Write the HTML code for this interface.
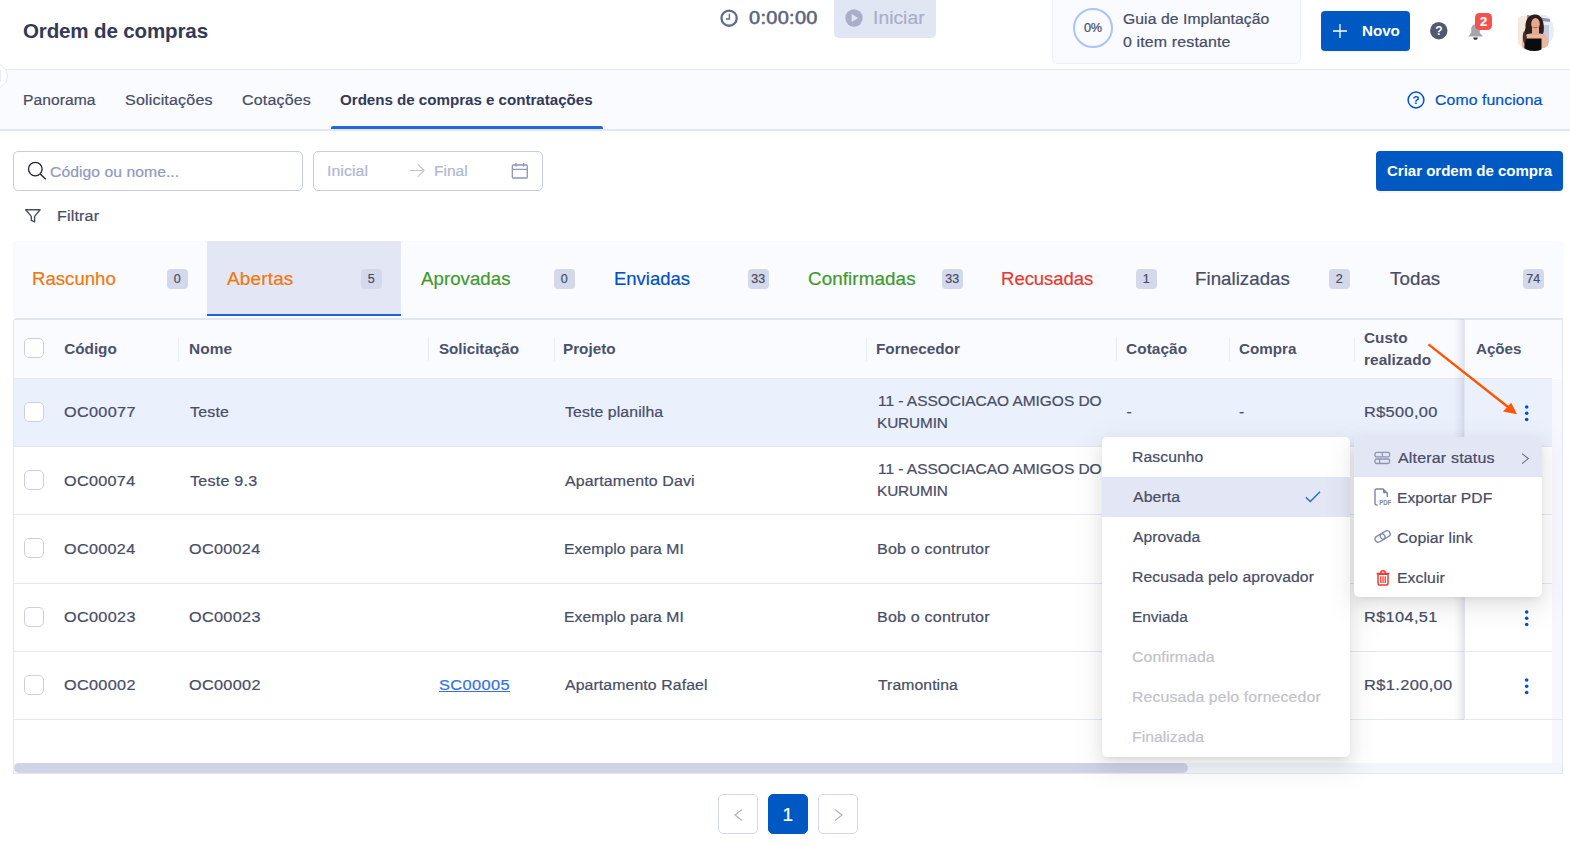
<!DOCTYPE html>
<html lang="pt-BR">
<head>
<meta charset="utf-8">
<title>Ordem de compras</title>
<style>
*{box-sizing:border-box;margin:0;padding:0}
html,body{width:1570px;height:846px;overflow:hidden;background:#fff}
body{font-family:"Liberation Sans",sans-serif;color:#474d66;font-size:16px;position:relative}
.a,.t{position:absolute}
.t{transform-origin:0 0;white-space:nowrap;line-height:30px;height:30px;-webkit-text-stroke:0.22px currentColor}
.b{font-weight:700;-webkit-text-stroke:0}
svg{display:block;position:absolute;overflow:visible}
.inp{border:1px solid #c5cce3;border-radius:5px;background:#fff}
.bdg{top:269px;width:20.500px;height:20px;border-radius:4px;background:#d3d8ea}
.sep{top:337px;width:1px;height:24px;background:#e9ecf6}
.hl{left:14px;width:1538px;height:1px;background:#e3e7f6}
.cb{left:24px;width:20px;height:20px;border:1px solid #c9cfe4;border-radius:5px;background:#fff}
.pg{top:794px;width:40px;height:40px;border:1px solid #d3d9ee;border-radius:5px;background:#fff}
.menu{background:#fff;border-radius:5px;box-shadow:0 6px 16px 0 rgba(0,0,0,.08),0 3px 6px -4px rgba(0,0,0,.12),0 9px 28px 8px rgba(0,0,0,.05)}
</style>
</head>
<body>
<!-- ===== header ===== -->
<div class="a" style="left:0;top:69px;width:1570px;height:62px;background:#fafbff;border-top:1px solid #e3e7f6;border-bottom:2px solid #e1e5f4"></div>
<div class="a" style="left:-18.500px;top:62.500px;width:26.500px;height:26.500px;border:1px solid #e3e7f6;border-radius:50%;background:#fff"></div>
<div class="a" style="left:0;top:70px;width:1px;height:12px;background:#eceef4"></div>
<!-- clock -->
<svg style="left:720px;top:9px" width="18" height="18" viewBox="0 0 18 18"><circle cx="9.100" cy="9.150" r="7.600" fill="none" stroke="#5f6a90" stroke-width="2.300"/><path d="M9.400 4.800V10H5.900" fill="none" stroke="#5f6a90" stroke-width="1.400"/></svg>
<div class="a" style="left:834px;top:-4px;width:102px;height:42px;background:#e1e6f5;border-radius:5px"></div>
<svg style="left:845px;top:9px" width="18" height="18" viewBox="0 0 18 18"><circle cx="9" cy="9" r="8.700" fill="#a9afc9"/><path d="M6.700 4.900L13 9L6.700 13.100Z" fill="#e1e6f5"/></svg>
<!-- guia -->
<div class="a" style="left:1052px;top:-6px;width:249px;height:70px;border:1px solid #edf0fa;border-radius:6px;background:#fafbff"></div>
<div class="a" style="left:1073px;top:8px;width:40px;height:40px;border-radius:50%;border:2.200px solid #adc3f7"></div>
<!-- novo -->
<div class="a" style="left:1321px;top:11px;width:89px;height:40px;background:#0059c3;border-radius:4px;box-shadow:0 2px 0 rgba(0,40,120,.04)"></div>
<svg style="left:1333px;top:24px" width="14" height="14" viewBox="0 0 14 14"><path d="M7 0V14M0 7H14" stroke="#fff" stroke-width="1.300" fill="none"/></svg>
<!-- help -->
<svg style="left:1430px;top:22px" width="18" height="18" viewBox="0 0 18 18"><circle cx="8.800" cy="8.700" r="8.700" fill="#525970"/><text x="8.800" y="13" font-family="Liberation Sans, sans-serif" font-size="12" font-weight="700" fill="#fff" text-anchor="middle">?</text></svg>
<!-- bell -->
<svg style="left:1467px;top:23px" width="18" height="18" viewBox="0 0 18 18"><path d="M8.500 1.200C5.600 1.200 4.200 3.400 4.200 6V9.800L1.200 13.400H15.800L12.800 9.800V6C12.800 3.400 11.400 1.200 8.500 1.200Z" fill="#a6a6aa"/><path d="M6.300 14.500H10.700C10.700 15.900 9.800 16.800 8.500 16.800C7.200 16.800 6.300 15.900 6.300 14.500Z" fill="#2e2f36"/></svg>
<div class="a" style="left:1475px;top:13px;width:17px;height:17px;border-radius:4.500px;background:#f5514f"></div>
<div class="t" style="left:1475px;top:6.500px;width:17px;text-align:center;font-size:13px;font-weight:700;color:#fff">2</div>
<!-- avatar -->
<svg style="left:1514px;top:11px" width="40" height="40" viewBox="0 0 40 40">
<defs><clipPath id="avc"><circle cx="20" cy="20" r="20"/></clipPath></defs>
<g clip-path="url(#avc)">
<rect width="40" height="40" fill="#fdfdfd"/>
<rect x="13" y="4" width="27" height="26" fill="#e8edf5"/>
<rect x="27" y="14" width="8" height="18" fill="#c3ccda"/>
<rect x="4" y="5" width="9" height="36" fill="#f3e9df"/>
<path d="M13 4L36 8V11L13 8Z" fill="#8c98ad"/>
<path d="M20 3.500C14 4 11 10 11.500 17C10 21 9.500 25 10.500 28L15 24L29 23C30.500 19 30 13 28.500 9C27 5 24 3.200 20 3.500Z" fill="#2d1c1a"/>
<path d="M8 30C9 25 13 22.500 17 22.500H26C31 22.500 34 26 34.500 31V37H8Z" fill="#e9b79e"/>
<ellipse cx="21.500" cy="13" rx="4.300" ry="6" fill="#e2ab91"/>
<path d="M18 17H25V24H18Z" fill="#e2ab91"/>
<path d="M18.500 15.200C20 16.600 23 16.600 24.500 15.200C23.500 17.600 19.500 17.600 18.500 15.200Z" fill="#b3403f"/>
<path d="M11 27.500H27.500V41H10Z" fill="#0c0c10"/>
<path d="M10 20C8 24 8.500 30 10.500 33L13 26Z" fill="#4a3027"/>
</g></svg>
<!-- subnav -->
<div class="a" style="left:331px;top:126px;width:272px;height:3px;background:#2569d8;border-radius:2px 2px 0 0"></div>
<svg style="left:1407px;top:91px" width="18" height="18" viewBox="0 0 18 18"><circle cx="9" cy="9" r="7.900" fill="none" stroke="#0052c8" stroke-width="1.500"/><text x="9" y="13.200" font-family="Liberation Sans, sans-serif" font-size="11.500" font-weight="700" fill="#0052c8" text-anchor="middle">?</text></svg>

<!-- ===== filters ===== -->
<div class="a inp" style="left:13px;top:151px;width:290px;height:40px"></div>
<svg style="left:26px;top:160px" width="22" height="22" viewBox="0 0 22 22"><circle cx="9.300" cy="9.100" r="6.800" fill="none" stroke="#23262f" stroke-width="1.300"/><path d="M14.200 14L19.800 19.200" stroke="#23262f" stroke-width="1.400" fill="none"/></svg>
<div class="a inp" style="left:313px;top:151px;width:230px;height:40px"></div>
<svg style="left:409px;top:163px" width="16" height="15" viewBox="0 0 16 15"><path d="M0.500 7.500H15M8.800 1.200L15 7.500L8.800 13.800" fill="none" stroke="#c0c5dc" stroke-width="1.200"/></svg>
<svg style="left:511px;top:162px" width="18" height="18" viewBox="0 0 18 18"><rect x="1.300" y="3" width="15" height="13" rx="1" fill="none" stroke="#8f95b5" stroke-width="1.300"/><path d="M1.300 7.300H16.300M5 1V4.500M12.600 1V4.500" stroke="#8f95b5" stroke-width="1.300" fill="none"/></svg>
<div class="a" style="left:1376px;top:151px;width:187px;height:40px;background:#0059c3;border-radius:4px;box-shadow:0 2px 0 rgba(0,40,120,.04)"></div>
<svg style="left:24px;top:208px" width="18" height="16" viewBox="0 0 18 16"><path d="M1.700 1.700H16.100L10.600 8.400V13.900L7.300 12.300V8.400Z" fill="none" stroke="#474d66" stroke-width="1.400" stroke-linejoin="round"/></svg>

<!-- ===== status tabs ===== -->
<div class="a" style="left:13px;top:241px;width:1550.500px;height:77px;background:#fafbff"></div>
<div class="a" style="left:207px;top:241px;width:194px;height:75px;background:#e3e7f5;border-bottom:2px solid #1f63d6"></div>
<div class="a bdg" style="left:167px"></div><div class="a bdg" style="left:361px"></div><div class="a bdg" style="left:554px"></div><div class="a bdg" style="left:748px"></div>
<div class="a bdg" style="left:942px"></div><div class="a bdg" style="left:1136px"></div><div class="a bdg" style="left:1329px"></div><div class="a bdg" style="left:1523px"></div>

<!-- ===== table ===== -->
<div class="a" style="left:13px;top:318px;width:1550px;height:456px;background:#fff;border:1px solid #e3e7f6;border-top:2px solid #e1e5f4;border-radius:4px 0 0 0"></div>
<div class="a" style="left:14px;top:320px;width:1548px;height:58px;background:#fafbff"></div>
<div class="a" style="left:14px;top:379px;width:1538px;height:67px;background:#ebf0fd"></div>
<div class="a" style="left:1552px;top:379px;width:10px;height:384px;background:#f7f8fd"></div>
<div class="a hl" style="top:378px"></div>
<div class="a hl" style="top:446px"></div>
<div class="a hl" style="top:514px"></div>
<div class="a hl" style="top:583px"></div>
<div class="a hl" style="top:651px"></div>
<div class="a hl" style="top:719px;width:1548px"></div>
<div class="a sep" style="left:178px"></div><div class="a sep" style="left:428px"></div><div class="a sep" style="left:553.500px"></div><div class="a sep" style="left:866px"></div>
<div class="a sep" style="left:1116px"></div><div class="a sep" style="left:1228.500px"></div><div class="a sep" style="left:1353.500px"></div>
<div class="a cb" style="top:338px"></div>
<div class="a cb" style="top:402px"></div>
<div class="a cb" style="top:470px"></div>
<div class="a cb" style="top:538px"></div>
<div class="a cb" style="top:607px"></div>
<div class="a cb" style="top:675px"></div>
<!-- actions col shadow + border -->
<div class="a" style="left:1452.500px;top:319px;width:12px;height:401px;background:linear-gradient(to right,rgba(70,75,110,0),rgba(70,75,110,.05) 50%,rgba(70,75,110,.16))"></div>
<div class="a" style="left:1464px;top:319px;width:1px;height:401px;background:#e3e6f2"></div>
<svg style="left:1523px;top:403.9px" width="8" height="19" viewBox="0 0 8 19"><circle cx="3.700" cy="3" r="1.800" fill="#0052c8"/><circle cx="3.700" cy="9.250" r="1.800" fill="#0052c8"/><circle cx="3.700" cy="15.500" r="1.800" fill="#0052c8"/></svg>
<svg style="left:1523px;top:608.7px" width="8" height="19" viewBox="0 0 8 19"><circle cx="3.700" cy="3" r="1.800" fill="#0052c8"/><circle cx="3.700" cy="9.250" r="1.800" fill="#0052c8"/><circle cx="3.700" cy="15.500" r="1.800" fill="#0052c8"/></svg>
<svg style="left:1523px;top:676.9px" width="8" height="19" viewBox="0 0 8 19"><circle cx="3.700" cy="3" r="1.800" fill="#0052c8"/><circle cx="3.700" cy="9.250" r="1.800" fill="#0052c8"/><circle cx="3.700" cy="15.500" r="1.800" fill="#0052c8"/></svg>
<!-- scrollbar -->
<div class="a" style="left:14px;top:763px;width:1548px;height:10px;background:#f3f5fc"></div>
<div class="a" style="left:14px;top:763px;width:1174px;height:10px;border-radius:5px;background:#cfd3e6"></div>

<div class="t b" style="top:15.70px;font-size:21px;color:#333a56;letter-spacing:-0.165px;transform:scaleX(0.9797);left:22.65px;">Ordem de compras</div>
<div class="t" style="top:84.50px;font-size:15.5px;letter-spacing:0.076px;transform:scaleX(1.0069);left:22.75px;">Panorama</div>
<div class="t" style="top:84.50px;font-size:15.5px;letter-spacing:0.157px;transform:scaleX(1.0364);left:124.76px;">Solicitações</div>
<div class="t" style="top:84.50px;font-size:15.5px;letter-spacing:0.170px;transform:scaleX(1.0319);left:242.18px;">Cotações</div>
<div class="t b" style="top:84.50px;font-size:15.3px;color:#333a56;letter-spacing:-0.040px;transform:scaleX(0.9919);left:340.26px;">Ordens de compras e contratações</div>
<div class="t" style="top:2.60px;font-size:19px;color:#5a627c;letter-spacing:0.297px;transform:scaleX(1.0497);left:749.04px;-webkit-text-stroke:0.55px #5a627c;">0:00:00</div>
<div class="t" style="top:2.50px;font-size:19px;color:#a9afc6;letter-spacing:0.048px;transform:scaleX(1.0121);left:873.24px;">Iniciar</div>
<div class="t" style="top:3.50px;font-size:15.5px;letter-spacing:0.071px;transform:scaleX(1.0142);left:1123.18px;">Guia de Implantação</div>
<div class="t" style="top:26.50px;font-size:15.5px;letter-spacing:0.140px;transform:scaleX(1.0281);left:1122.65px;">0 item restante</div>
<div class="t" style="top:12.50px;font-size:13px;letter-spacing:-0.256px;transform:scaleX(0.9750);left:1083.94px;">0%</div>
<div class="t b" style="top:15.50px;font-size:15.3px;color:#fff;letter-spacing:-0.023px;transform:scaleX(0.9927);left:1362.00px;">Novo</div>
<div class="t" style="top:84.50px;font-size:15.5px;color:#0052c8;letter-spacing:0.099px;transform:scaleX(1.0184);left:1434.78px;">Como funciona</div>
<div class="t b" style="top:155.50px;font-size:15.3px;color:#fff;letter-spacing:-0.056px;transform:scaleX(0.9885);left:1387.06px;">Criar ordem de compra</div>
<div class="t" style="top:157.10px;font-size:15.5px;color:#8f99c0;letter-spacing:0.052px;transform:scaleX(1.0128);left:50.18px;">Código ou nome...</div>
<div class="t" style="top:155.50px;font-size:15.5px;color:#b0b6d0;letter-spacing:0.069px;transform:scaleX(1.0236);left:326.81px;">Inicial</div>
<div class="t" style="top:155.50px;font-size:15.5px;color:#b0b6d0;letter-spacing:0.023px;left:433.95px;">Final</div>
<div class="t" style="top:201.00px;font-size:15.5px;letter-spacing:0.162px;transform:scaleX(1.0358);left:57.46px;">Filtrar</div>
<div class="t" style="top:263.50px;font-size:18.5px;color:#f0780c;letter-spacing:0.020px;transform:scaleX(1.0043);left:31.94px;">Rascunho</div>
<div class="t" style="top:263.50px;font-size:18.5px;color:#f0780c;letter-spacing:0.165px;transform:scaleX(1.0248);left:226.81px;">Abertas</div>
<div class="t" style="top:263.50px;font-size:18.5px;color:#3f9a2d;letter-spacing:0.047px;transform:scaleX(1.0073);left:420.81px;">Aprovadas</div>
<div class="t" style="top:263.50px;font-size:18.5px;color:#0052c8;letter-spacing:-0.006px;transform:scaleX(0.9977);left:614.09px;">Enviadas</div>
<div class="t" style="top:263.50px;font-size:18.5px;color:#3f9a2d;letter-spacing:0.097px;transform:scaleX(1.0160);left:807.71px;">Confirmadas</div>
<div class="t" style="top:263.50px;font-size:18.5px;color:#e8392f;letter-spacing:-0.037px;left:1001.09px;">Recusadas</div>
<div class="t" style="top:263.50px;font-size:18.5px;letter-spacing:0.044px;transform:scaleX(1.0086);left:1194.94px;">Finalizadas</div>
<div class="t" style="top:263.50px;font-size:18.5px;letter-spacing:0.081px;transform:scaleX(1.0102);left:1390.31px;">Todas</div>
<div class="t" style="top:264.20px;font-size:12.5px;left:147.25px;width:60px;text-align:center;">0</div>
<div class="t" style="top:264.20px;font-size:12.5px;left:341.25px;width:60px;text-align:center;">5</div>
<div class="t" style="top:264.20px;font-size:12.5px;left:534.25px;width:60px;text-align:center;">0</div>
<div class="t" style="top:264.20px;font-size:12.5px;left:728.25px;width:60px;text-align:center;">33</div>
<div class="t" style="top:264.20px;font-size:12.5px;left:922.25px;width:60px;text-align:center;">33</div>
<div class="t" style="top:264.20px;font-size:12.5px;left:1116.25px;width:60px;text-align:center;">1</div>
<div class="t" style="top:264.20px;font-size:12.5px;left:1309.25px;width:60px;text-align:center;">2</div>
<div class="t" style="top:264.20px;font-size:12.5px;left:1503.25px;width:60px;text-align:center;">74</div>
<div class="t b" style="top:333.75px;font-size:15.3px;color:#4b516b;letter-spacing:-0.033px;left:64.26px;">Código</div>
<div class="t b" style="top:333.75px;font-size:15.3px;color:#4b516b;letter-spacing:0.118px;transform:scaleX(1.0079);left:189.00px;">Nome</div>
<div class="t b" style="top:333.75px;font-size:15.3px;color:#4b516b;letter-spacing:-0.032px;transform:scaleX(0.9941);left:439.16px;">Solicitação</div>
<div class="t b" style="top:333.75px;font-size:15.3px;color:#4b516b;transform:scaleX(0.9971);left:563.00px;">Projeto</div>
<div class="t b" style="top:333.75px;font-size:15.3px;color:#4b516b;letter-spacing:-0.029px;left:876.00px;">Fornecedor</div>
<div class="t b" style="top:333.75px;font-size:15.3px;color:#4b516b;letter-spacing:0.062px;transform:scaleX(1.0063);left:1126.19px;">Cotação</div>
<div class="t b" style="top:333.75px;font-size:15.3px;color:#4b516b;letter-spacing:-0.010px;transform:scaleX(0.9931);left:1239.26px;">Compra</div>
<div class="t b" style="top:323.00px;font-size:15.3px;color:#4b516b;letter-spacing:0.022px;transform:scaleX(1.0020);left:1364.26px;">Custo</div>
<div class="t b" style="top:345.00px;font-size:15.3px;color:#4b516b;letter-spacing:0.034px;transform:scaleX(1.0073);left:1364.00px;">realizado</div>
<div class="t b" style="top:333.75px;font-size:15.3px;color:#4b516b;letter-spacing:-0.058px;transform:scaleX(0.9926);left:1475.50px;">Ações</div>
<div class="t" style="top:396.50px;font-size:15.5px;letter-spacing:0.312px;transform:scaleX(1.0474);left:64.24px;">OC00077</div>
<div class="t" style="top:396.50px;font-size:15.5px;letter-spacing:0.189px;transform:scaleX(1.0313);left:189.51px;">Teste</div>
<div class="t" style="top:396.50px;font-size:15.5px;letter-spacing:0.109px;transform:scaleX(1.0199);left:564.51px;">Teste planilha</div>
<div class="t" style="top:385.75px;font-size:15.5px;letter-spacing:-0.016px;transform:scaleX(0.9978);left:877.99px;">11 - ASSOCIACAO AMIGOS DO</div>
<div class="t" style="top:407.75px;font-size:15.5px;letter-spacing:-0.090px;transform:scaleX(0.9880);left:876.78px;">KURUMIN</div>
<div class="t" style="top:396.50px;font-size:15.5px;left:1126.46px;">-</div>
<div class="t" style="top:396.50px;font-size:15.5px;left:1239.02px;">-</div>
<div class="t" style="top:396.50px;font-size:15.5px;letter-spacing:0.317px;transform:scaleX(1.0573);left:1363.57px;">R$500,00</div>
<div class="t" style="top:465.50px;font-size:15.5px;letter-spacing:0.301px;transform:scaleX(1.0437);left:64.24px;">OC00074</div>
<div class="t" style="top:465.50px;font-size:15.5px;letter-spacing:0.203px;transform:scaleX(1.0405);left:189.51px;">Teste 9.3</div>
<div class="t" style="top:465.50px;font-size:15.5px;letter-spacing:0.137px;transform:scaleX(1.0272);left:564.79px;">Apartamento Davi</div>
<div class="t" style="top:454.25px;font-size:15.5px;letter-spacing:-0.016px;transform:scaleX(0.9978);left:877.99px;">11 - ASSOCIACAO AMIGOS DO</div>
<div class="t" style="top:476.25px;font-size:15.5px;letter-spacing:-0.090px;transform:scaleX(0.9880);left:876.78px;">KURUMIN</div>
<div class="t" style="top:534.00px;font-size:15.5px;letter-spacing:0.301px;transform:scaleX(1.0437);left:64.24px;">OC00024</div>
<div class="t" style="top:534.00px;font-size:15.5px;letter-spacing:0.301px;transform:scaleX(1.0437);left:189.24px;">OC00024</div>
<div class="t" style="top:534.00px;font-size:15.5px;letter-spacing:0.073px;transform:scaleX(1.0139);left:563.71px;">Exemplo para MI</div>
<div class="t" style="top:534.00px;font-size:15.5px;letter-spacing:0.179px;transform:scaleX(1.0378);left:876.60px;">Bob o contrutor</div>
<div class="t" style="top:601.50px;font-size:15.5px;letter-spacing:0.307px;transform:scaleX(1.0473);left:64.24px;">OC00023</div>
<div class="t" style="top:601.50px;font-size:15.5px;letter-spacing:0.307px;transform:scaleX(1.0472);left:189.24px;">OC00023</div>
<div class="t" style="top:601.50px;font-size:15.5px;letter-spacing:0.073px;transform:scaleX(1.0139);left:563.71px;">Exemplo para MI</div>
<div class="t" style="top:601.50px;font-size:15.5px;letter-spacing:0.179px;transform:scaleX(1.0378);left:876.60px;">Bob o contrutor</div>
<div class="t" style="top:601.50px;font-size:15.5px;letter-spacing:0.315px;transform:scaleX(1.0559);left:1363.57px;">R$104,51</div>
<div class="t" style="top:669.75px;font-size:15.5px;letter-spacing:0.312px;transform:scaleX(1.0474);left:64.24px;">OC00002</div>
<div class="t" style="top:669.75px;font-size:15.5px;letter-spacing:0.312px;transform:scaleX(1.0476);left:189.24px;">OC00002</div>
<div class="t" style="top:669.75px;font-size:15.5px;color:#3672de;letter-spacing:0.347px;transform:scaleX(1.0578);left:438.60px;text-decoration:underline;">SC00005</div>
<div class="t" style="top:669.75px;font-size:15.5px;letter-spacing:0.111px;transform:scaleX(1.0200);left:564.79px;">Apartamento Rafael</div>
<div class="t" style="top:669.75px;font-size:15.5px;letter-spacing:0.086px;transform:scaleX(1.0149);left:877.51px;">Tramontina</div>
<div class="t" style="top:669.75px;font-size:15.5px;letter-spacing:0.334px;transform:scaleX(1.0612);left:1363.57px;">R$1.200,00</div>

<!-- arrow -->
<svg style="left:1420px;top:338px" width="110" height="84" viewBox="0 0 110 84"><path d="M8.500 6.400L88 69" stroke="#ff5500" stroke-width="2.400" fill="none"/><path d="M97 76.200L83 73.500L91.200 64.700Z" fill="#ff5500"/></svg>

<!-- pagination -->
<div class="a pg" style="left:718px"></div>
<svg style="left:734px;top:808.500px" width="9" height="12" viewBox="0 0 9 12"><path d="M8 0.500L1 6L8 11.500" fill="none" stroke="#b3b3b6" stroke-width="1.200"/></svg>
<div class="a pg" style="left:768px;background:#0059c3;border-color:#0059c3"></div>
<div class="a pg" style="left:818px"></div>
<svg style="left:834px;top:808.500px" width="9" height="12" viewBox="0 0 9 12"><path d="M1 0.500L8 6L1 11.500" fill="none" stroke="#b3b3b6" stroke-width="1.200"/></svg>

<!-- ===== menus ===== -->
<div class="a menu" style="left:1102px;top:437px;width:248px;height:320px"></div>
<div class="a" style="left:1102px;top:477px;width:248px;height:40px;background:#e3e7f5"></div>
<svg style="left:1305px;top:491px" width="16" height="12" viewBox="0 0 16 12"><path d="M0.800 6.300L5.300 10.600L15 0.800" fill="none" stroke="#2569d8" stroke-width="1.400"/></svg>
<div class="a menu" style="left:1354px;top:437px;width:188px;height:160px"></div>
<div class="a" style="left:1354px;top:437px;width:188px;height:40px;background:#e3e7f5;border-radius:5px 5px 0 0"></div>
<!-- alterar status icon -->
<svg style="left:1374.300px;top:451.300px" width="17" height="14" viewBox="0 0 17 14"><rect x="1" y="1.400" width="14.600" height="4.500" rx="1.500" fill="none" stroke="#8d94b3" stroke-width="1.300"/><rect x="1" y="8" width="14.600" height="4.500" rx="1.500" fill="none" stroke="#8d94b3" stroke-width="1.300"/><path d="M8.300 1.400V5.900M5.600 8V12.500" stroke="#8d94b3" stroke-width="1.200"/></svg>
<svg style="left:1521px;top:452.700px" width="8" height="11" viewBox="0 0 8 11"><path d="M1 0.600L7.300 5.600L1 10.600" fill="none" stroke="#6f7282" stroke-width="1.150"/></svg>
<!-- pdf icon -->
<svg style="left:1374px;top:488px" width="18" height="18" viewBox="0 0 18 18"><path d="M3.500 17H2.500C1.600 17 1 16.400 1 15.500V2.500C1 1.600 1.600 1 2.500 1H9L13.300 5.300V9" fill="none" stroke="#7c86a8" stroke-width="1.400"/><path d="M9 1V4C9 4.800 9.500 5.300 10.300 5.300H13.300Z" fill="#7d849f"/><text x="5.200" y="16.800" font-family="Liberation Sans, sans-serif" font-size="6.500" font-weight="700" fill="#7d849f" textLength="12" lengthAdjust="spacingAndGlyphs">PDF</text></svg>
<!-- link icon -->
<svg style="left:1374.300px;top:530.200px" width="18" height="14" viewBox="0 0 18 14"><g fill="none" stroke="#7f88a8" stroke-width="1.350"><rect x="0.800" y="4.900" width="10.400" height="6.200" rx="3.100" transform="rotate(-30 6 8)"/><rect x="6" y="1.800" width="10.400" height="6.200" rx="3.100" transform="rotate(-30 11.200 4.900)"/></g></svg>
<!-- trash icon -->
<svg style="left:1376px;top:569.500px" width="14" height="16" viewBox="0 0 14 16"><path d="M2 4.300H12V13.300C12 14.400 11.300 15.100 10.200 15.100H3.800C2.700 15.100 2 14.400 2 13.300Z" fill="none" stroke="#ee3d32" stroke-width="1.500"/><path d="M0.600 3.600H13.400M4.600 3.400C4.600 1.600 5.400 0.800 7 0.800C8.600 0.800 9.400 1.600 9.400 3.400" fill="none" stroke="#ee3d32" stroke-width="1.500"/><path d="M4.800 6.300V13M7 6.300V13M9.200 6.300V13" stroke="#ee3d32" stroke-width="1.300"/></svg>

<div class="t" style="top:442.00px;font-size:15.5px;letter-spacing:0.100px;transform:scaleX(1.0118);left:1131.75px;">Rascunho</div>
<div class="t" style="top:482.00px;font-size:15.5px;letter-spacing:0.102px;transform:scaleX(1.0203);left:1132.79px;">Aberta</div>
<div class="t" style="top:522.00px;font-size:15.5px;letter-spacing:0.054px;transform:scaleX(1.0071);left:1132.79px;">Aprovada</div>
<div class="t" style="top:562.00px;font-size:15.5px;letter-spacing:0.076px;transform:scaleX(1.0150);left:1131.71px;">Recusada pelo aprovador</div>
<div class="t" style="top:602.00px;font-size:15.5px;letter-spacing:-0.013px;transform:scaleX(0.9962);left:1131.75px;">Enviada</div>
<div class="t" style="top:642.00px;font-size:15.5px;color:#c2c3c8;letter-spacing:0.101px;transform:scaleX(1.0202);left:1132.18px;">Confirmada</div>
<div class="t" style="top:682.00px;font-size:15.5px;color:#c2c3c8;letter-spacing:0.122px;transform:scaleX(1.0219);left:1131.66px;">Recusada pelo fornecedor</div>
<div class="t" style="top:722.00px;font-size:15.5px;color:#c2c3c8;letter-spacing:0.057px;transform:scaleX(1.0117);left:1131.76px;">Finalizada</div>
<div class="t" style="top:442.50px;font-size:15.5px;letter-spacing:0.150px;transform:scaleX(1.0350);left:1397.62px;">Alterar status</div>
<div class="t" style="top:482.50px;font-size:15.5px;letter-spacing:0.045px;transform:scaleX(1.0090);left:1396.56px;">Exportar PDF</div>
<div class="t" style="top:522.50px;font-size:15.5px;letter-spacing:0.082px;transform:scaleX(1.0204);left:1396.98px;">Copiar link</div>
<div class="t" style="top:562.50px;font-size:15.5px;letter-spacing:0.067px;transform:scaleX(1.0177);left:1396.51px;">Excluir</div>
<div class="t" style="top:799.50px;font-size:19px;color:#fff;left:782.44px;">1</div>
</body>
</html>
